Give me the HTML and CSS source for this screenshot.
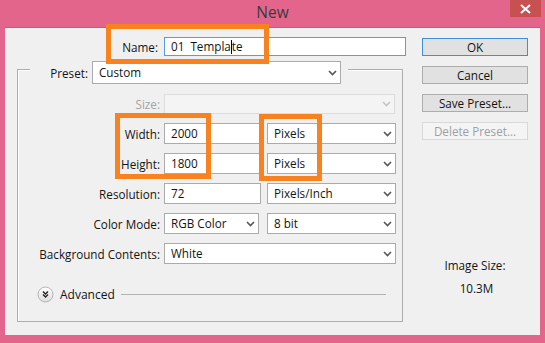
FILE: index.html
```html
<!DOCTYPE html>
<html>
<head>
<meta charset="utf-8">
<link rel="stylesheet" href="styles.css">
</head>
<body>
<div class="window">
  <div class="titlebar">
    <span class="title">New</span>
    <div class="close"><svg width="11" height="10" viewBox="0 0 11 10"><path d="M1 1 L10 9 M10 1 L1 9" stroke="#fff" stroke-width="2" fill="none"/></svg></div>
  </div>
  <div class="panel">
    <div class="main">
      <div class="name-row">
        <span class="lbl name-lbl">Name:</span>
        <div class="field name-field">01  Templa<span class="caret"></span>te</div>
      </div>
      <div class="group">
        <div class="preset-row">
          <span class="lbl">Preset:</span>
          <div class="field select preset-sel"><span>Custom</span><svg class="chev" width="9" height="6" viewBox="0 0 9 6"><path d="M1 1 L4.5 4.5 L8 1" stroke="#555" stroke-width="1.6" fill="none"/></svg></div>
        </div>
        <div class="rows">
          <div class="row">
            <span class="lbl disabled">Size:</span>
            <div class="field select off size-sel"><span></span><svg class="chev" width="9" height="6" viewBox="0 0 9 6"><path d="M1 1 L4.5 4.5 L8 1" stroke="#c4c4c4" stroke-width="1.6" fill="none"/></svg></div>
          </div>
          <div class="row">
            <span class="lbl">Width:</span>
            <div class="field text-in">2000</div>
            <div class="field select unit"><span>Pixels</span><svg class="chev" width="9" height="6" viewBox="0 0 9 6"><path d="M1 1 L4.5 4.5 L8 1" stroke="#555" stroke-width="1.6" fill="none"/></svg></div>
          </div>
          <div class="row">
            <span class="lbl">Height:</span>
            <div class="field text-in">1800</div>
            <div class="field select unit"><span>Pixels</span><svg class="chev" width="9" height="6" viewBox="0 0 9 6"><path d="M1 1 L4.5 4.5 L8 1" stroke="#555" stroke-width="1.6" fill="none"/></svg></div>
          </div>
          <div class="row">
            <span class="lbl">Resolution:</span>
            <div class="field text-in">72</div>
            <div class="field select unit"><span>Pixels/Inch</span><svg class="chev" width="9" height="6" viewBox="0 0 9 6"><path d="M1 1 L4.5 4.5 L8 1" stroke="#555" stroke-width="1.6" fill="none"/></svg></div>
          </div>
          <div class="row">
            <span class="lbl">Color Mode:</span>
            <div class="field select mode-sel"><span>RGB Color</span><svg class="chev" width="9" height="6" viewBox="0 0 9 6"><path d="M1 1 L4.5 4.5 L8 1" stroke="#555" stroke-width="1.6" fill="none"/></svg></div>
            <div class="field select unit bit"><span>8 bit</span><svg class="chev" width="9" height="6" viewBox="0 0 9 6"><path d="M1 1 L4.5 4.5 L8 1" stroke="#555" stroke-width="1.6" fill="none"/></svg></div>
          </div>
          <div class="row">
            <span class="lbl">Background Contents:</span>
            <div class="field select bg-sel"><span>White</span><svg class="chev" width="9" height="6" viewBox="0 0 9 6"><path d="M1 1 L4.5 4.5 L8 1" stroke="#555" stroke-width="1.6" fill="none"/></svg></div>
          </div>
        </div>
        <div class="advanced">
          <svg class="adv-icon" width="17" height="17" viewBox="0 0 17 17">
            <defs><linearGradient id="g" x1="0" y1="0" x2="0" y2="1"><stop offset="0" stop-color="#ffffff"/><stop offset="1" stop-color="#dcdcdc"/></linearGradient></defs>
            <circle cx="8.5" cy="8.5" r="7.5" fill="url(#g)" stroke="#b4b4b4"/>
            <path d="M6 5.5 L8.5 8 L11 5.5 M6 8.5 L8.5 11 L11 8.5" stroke="#222" stroke-width="1.4" fill="none"/>
          </svg>
          <span class="adv-text">Advanced</span>
          <span class="adv-line"></span>
        </div>
      </div>
    </div>
    <div class="side">
      <div class="btn ok">OK</div>
      <div class="btn">Cancel</div>
      <div class="btn">Save Preset...</div>
      <div class="btn dis">Delete Preset...</div>
      <div class="imgsize">Image Size:</div>
      <div class="imgval">10.3M</div>
    </div>
  </div>
  <div class="mark m-name"></div>
  <div class="mark m-dims"></div>
  <div class="mark m-units"></div>
</div>
</body>
</html>
```
FILE: styles.css
```css
* { box-sizing: border-box; }
html, body { margin: 0; padding: 0; }
body {
  width: 545px;
  height: 343px;
  background: #e4658c;
  font-family: "Open Sans", "Noto Sans", sans-serif;
  font-size: 11.7px;
  color: #141414;
  overflow: hidden;
}
.window { position: relative; width: 545px; height: 343px; }
.titlebar {
  position: relative;
  height: 27px;
  display: flex;
  justify-content: center;
  padding-top: 2px;
}
.title {
  font-size: 15.5px;
  line-height: 20px;
  color: #3a3a3a;
}
.close {
  position: absolute;
  top: 0;
  right: 4px;
  width: 31px;
  height: 17px;
  background: #c75050;
  display: flex;
  align-items: center;
  justify-content: center;
}
.panel {
  margin: 0 5px;
  height: 308px;
  background: #f0f0f0;
  border-top: 1px solid #c9587b;
  display: flex;
  padding: 9px 0 0 12px;
}
.main { width: 405px; }
.lbl {
  text-align: right;
  white-space: nowrap;
  line-height: 16px;
}
.lbl.disabled { color: #a3a3a3; }
.name-row {
  display: flex;
  align-items: center;
  height: 19px;
}
.name-lbl { width: 141px; margin-right: 6px; }
.field {
  background: #fff;
  border: 1px solid #ababab;
  height: 21px;
  line-height: 19px;
  padding-left: 6px;
  white-space: pre;
  display: flex;
  align-items: center;
}
.name-field {
  width: 242px;
  height: 19px;
  line-height: 17px;
  border-color: #569de5;
}
.caret {
  display: inline-block;
  width: 1px;
  height: 14px;
  background: #000;
}
.group {
  margin-top: 13px;
  width: 386px;
  height: 253px;
  border: 1px solid #adadad;
  box-shadow: inset 1px 1px 0 #fff;
}
.preset-row {
  margin: -9px 0 0 12px;
  width: 318px;
  height: 23px;
  padding-right: 7px;
  background: #f0f0f0;
  display: flex;
  justify-content: flex-end;
  align-items: center;
  gap: 4px;
}
.select { justify-content: space-between; padding-right: 3px; }
.select .chev { flex: none; }
.preset-sel { width: 249px; height: 23px; }
.rows {
  margin-top: 9px;
  display: flex;
  flex-direction: column;
  gap: 9px;
}
.row {
  display: flex;
  align-items: center;
  height: 21px;
}
.row .lbl { width: 142px; margin-right: 4px; }
.off { background: #f4f4f4; border-color: #dcdcdc; }
.size-sel { width: 231px; height: 20px; }
.text-in { width: 97px; }
.unit { width: 129px; margin-left: 6px; }
.mode-sel { width: 95px; }
.unit.bit { margin-left: 8px; }
.bg-sel { width: 232px; }
.advanced {
  margin-top: 22px;
  display: flex;
  align-items: center;
  height: 17px;
}
.adv-icon { margin-left: 19px; flex: none; }
.adv-text { margin-left: 6px; font-size: 12px; line-height: 16px; }
.adv-line {
  flex: 1;
  height: 0;
  border-top: 1px solid #b4b4b4;
  margin: 0 16px 0 6px;
}
.side {
  width: 106px;
  padding-top: 1px;
  display: flex;
  flex-direction: column;
  gap: 10px;
  align-items: stretch;
}
.btn {
  height: 18px;
  background: #e1e1e1;
  border: 1px solid #adadad;
  text-align: center;
  line-height: 16px;
}
.btn.ok { border-color: #3f8ed8; }
.btn.dis { background: #f4f4f4; border-color: #d9d9d9; color: #a0a0a0; }
.imgsize {
  margin-top: 107px;
  text-align: center;
  line-height: 16px;
}
.imgval {
  margin-top: -3px;
  text-align: center;
  line-height: 16px;
  padding-left: 3px;
}
.mark {
  position: absolute;
  border: 5px solid #f8821f;
}
.m-name { left: 106px; top: 24px; width: 163px; height: 40px; }
.m-dims { left: 115px; top: 113px; width: 96px; height: 66px; }
.m-units { left: 259px; top: 114px; width: 63px; height: 67px; }
```
